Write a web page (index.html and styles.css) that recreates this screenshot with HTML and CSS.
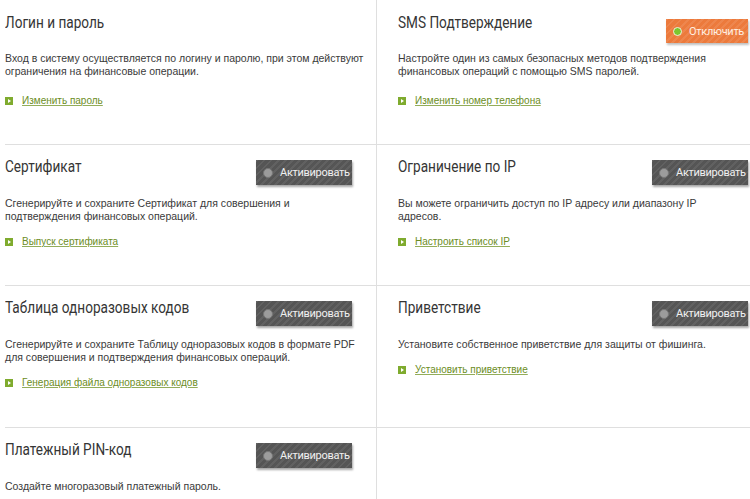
FILE: index.html
```html
<!DOCTYPE html>
<html lang="ru">
<head>
<meta charset="utf-8">
<title>Безопасность</title>
<link rel="stylesheet" href="styles.css">
</head>
<body>
<div class="grid">
  <section class="cell left first">
    <div class="head">
      <h2 class="title">Логин и пароль</h2>
    </div>
    <p class="desc wide">Вход в систему осуществляется по логину и паролю, при этом действуют ограничения на финансовые операции.</p>
    <a class="link" href="#"><span class="ico"></span><span class="lt">Изменить пароль</span></a>
  </section>
  <section class="cell right first">
    <div class="head">
      <h2 class="title">SMS Подтверждение</h2>
      <span class="btn on"><span class="dot"></span><span class="bt">Отключить</span></span>
    </div>
    <p class="desc">Настройте один из самых безопасных методов подтверждения финансовых операций с помощью SMS паролей.</p>
    <a class="link" href="#"><span class="ico"></span><span class="lt">Изменить номер телефона</span></a>
  </section>

  <section class="cell left">
    <div class="head">
      <h2 class="title">Сертификат</h2>
      <span class="btn"><span class="dot"></span><span class="bt">Активировать</span></span>
    </div>
    <p class="desc">Сгенерируйте и сохраните Сертификат для совершения и подтверждения финансовых операций.</p>
    <a class="link" href="#"><span class="ico"></span><span class="lt">Выпуск сертификата</span></a>
  </section>
  <section class="cell right">
    <div class="head">
      <h2 class="title">Ограничение по IP</h2>
      <span class="btn"><span class="dot"></span><span class="bt">Активировать</span></span>
    </div>
    <p class="desc">Вы можете ограничить доступ по IP адресу или диапазону IP адресов.</p>
    <a class="link" href="#"><span class="ico"></span><span class="lt">Настроить список IP</span></a>
  </section>

  <section class="cell left">
    <div class="head">
      <h2 class="title">Таблица одноразовых кодов</h2>
      <span class="btn"><span class="dot"></span><span class="bt">Активировать</span></span>
    </div>
    <p class="desc">Сгенерируйте и сохраните Таблицу одноразовых кодов в формате PDF для совершения и подтверждения финансовых операций.</p>
    <a class="link" href="#"><span class="ico"></span><span class="lt">Генерация файла одноразовых кодов</span></a>
  </section>
  <section class="cell right">
    <div class="head">
      <h2 class="title">Приветствие</h2>
      <span class="btn"><span class="dot"></span><span class="bt">Активировать</span></span>
    </div>
    <p class="desc">Установите собственное приветствие для защиты от фишинга.</p>
    <a class="link" href="#"><span class="ico"></span><span class="lt">Установить приветствие</span></a>
  </section>

  <section class="cell left last">
    <div class="head">
      <h2 class="title">Платежный PIN-код</h2>
      <span class="btn"><span class="dot"></span><span class="bt">Активировать</span></span>
    </div>
    <p class="desc">Создайте многоразовый платежный пароль.</p>
  </section>
  <section class="cell right last"></section>
</div>
</body>
</html>
```

FILE: styles.css
```css
* { box-sizing: border-box; }
html, body { margin: 0; padding: 0; background: #fff; }
body {
  font-family: "Liberation Sans", Arial, sans-serif;
  color: #3a3a3a;
  width: 750px;
  height: 499px;
  overflow: hidden;
}
.grid {
  display: grid;
  grid-template-columns: 376px 374px;
  grid-template-rows: 145px 141px 142px 71px;
}
.cell {
  border-bottom: 1px solid #dfdfdf;
  padding-top: 11px;
}
.cell.first { padding-top: 12px; }
.left { margin-left: 5px; }
.left .head { margin-right: 24px; }
.right { border-left: 1px solid #dfdfdf; padding-left: 21px; padding-right: 2px; }
.last { border-bottom: none; }
.head {
  display: flex;
  justify-content: space-between;
  align-items: flex-start;
  height: 41px;
}
.first .head { height: 40px; }
.title {
  margin: 0;
  font-family: Roboto, "Noto Sans", sans-serif;
  font-weight: 400;
  font-size: 17px;
  line-height: 20px;
  color: #353535;
  transform: scaleX(0.8);
  transform-origin: 0 50%;
  white-space: nowrap;
}
.btn {
  margin-top: 4px;
  display: flex;
  align-items: center;
  height: 25px;
  width: 96px;
  padding-left: 7px;
  gap: 7px;
  font-family: Roboto, "Noto Sans", sans-serif;
  font-size: 11px;
  letter-spacing: -0.3px;
  color: #f0f0f0;
  background-color: #555;
  background-image: repeating-linear-gradient(135deg, rgba(255,255,255,0.07) 0 2px, rgba(0,0,0,0) 2px 5px);
  box-shadow: 1px 2px 2px rgba(0,0,0,0.35);
  flex: none;
}
.btn .dot {
  width: 10px;
  height: 10px;
  border-radius: 50%;
  background: #9c9c9c;
  border: 1px solid #777;
  flex: none;
}
.btn.on {
  width: 82px;
  height: 24px;
  margin-top: 7px;
  padding-left: 7px;
  gap: 7px;
  color: #fff0e2;
  background-color: #ec7a3c;
  background-image: repeating-linear-gradient(135deg, rgba(255,255,255,0.09) 0 2px, rgba(0,0,0,0) 2px 5px);
  box-shadow: 1px 2px 2px rgba(0,0,0,0.25);
}
.btn.on .dot {
  width: 9px;
  height: 9px;
  background: #7cc62e;
  border: 1px solid #f1f1dc;
}
.desc {
  margin: 0;
  font-size: 10.5px;
  line-height: 13px;
  color: #3a3a3a;
}
.left .desc { max-width: 356px; }
.left .desc.wide { max-width: 368px; }
.right .desc { max-width: 322px; }
.link {
  display: flex;
  align-items: center;
  gap: 9px;
  height: 13px;
  margin-top: 12px;
  text-decoration: none;
}
.first .link { margin-top: 16px; }
.ico {
  width: 8px;
  height: 8px;
  background: #7fab2e;
  position: relative;
  flex: none;
}
.ico::after {
  content: "";
  position: absolute;
  left: 3px;
  top: 2px;
  border-left: 3px solid #fff;
  border-top: 2px solid transparent;
  border-bottom: 2px solid transparent;
}
.lt {
  font-size: 10px;
  color: #6c8d24;
  text-decoration: underline;
  text-decoration-color: #93ad5a;
}
```
